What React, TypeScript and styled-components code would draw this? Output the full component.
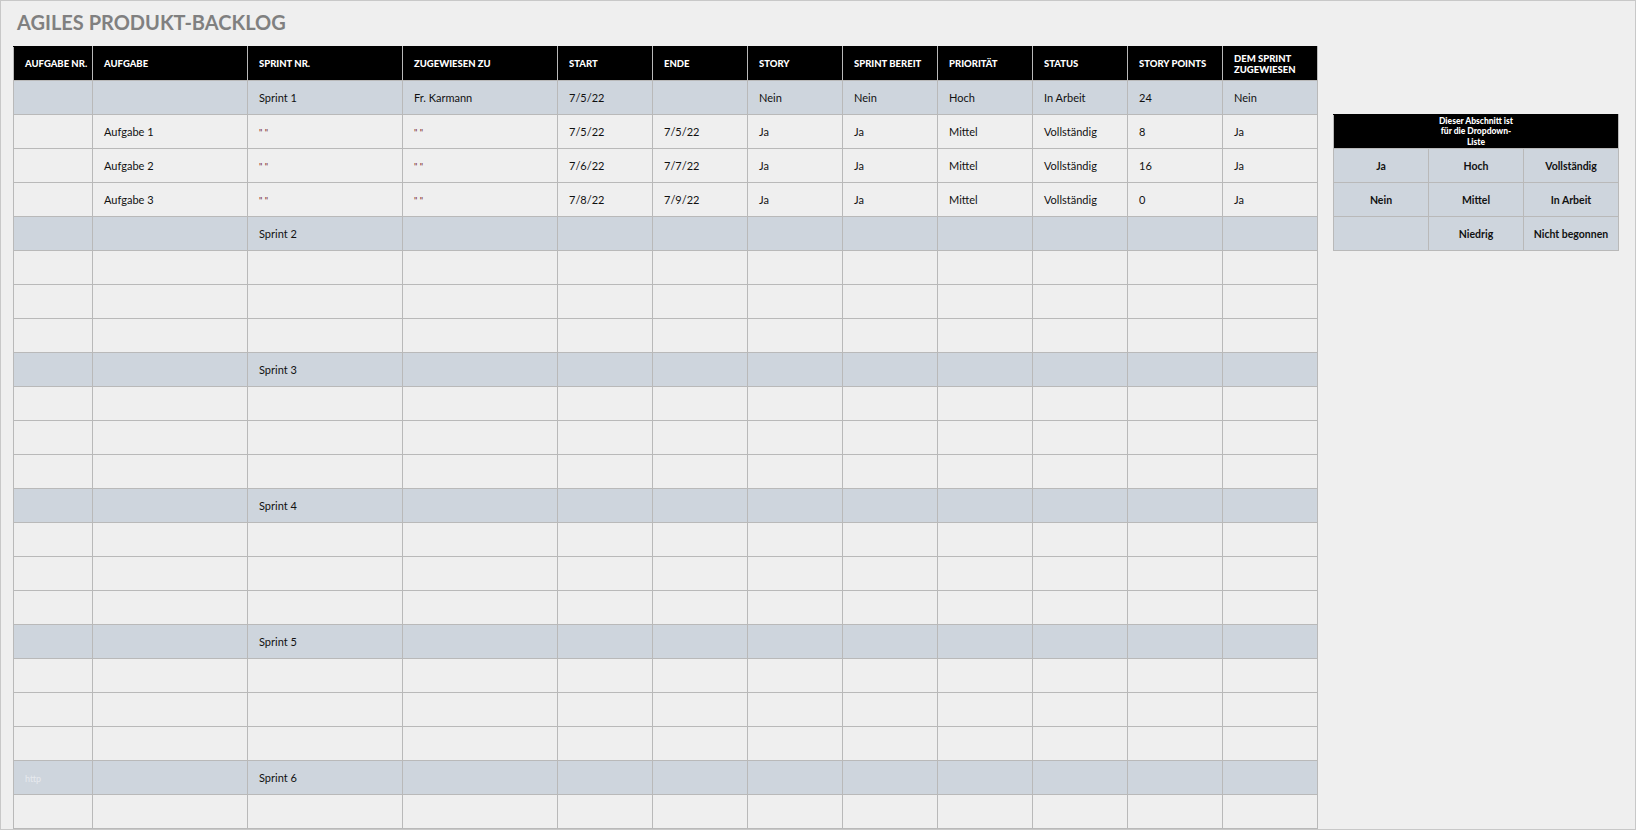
import React from "react";
import styled, { createGlobalStyle } from "styled-components";

const GlobalStyle = createGlobalStyle`
    html, body {
        margin: 0;
        padding: 0;
        background: #efefef;
    }
    * {
        box-sizing: border-box;
    }
`;

const Page = styled.div`
    width: 1636px;
    height: 830px;
    border: 1px solid #c8c8c8;
    background-color: #efefef;
    padding: 0 12px;
    overflow: hidden;
    font-family: "Lato", "Liberation Sans", sans-serif;
`;

const Title = styled.h1`
    margin: 0;
    padding-top: 8px;
    height: 45px;
    font-size: 20px;
    line-height: 26px;
    font-weight: 700;
    color: #808080;
    padding-left: 4px;
`;

const Content = styled.div`
    display: flex;
    align-items: flex-start;
    gap: 15px;
`;

const Table = styled.table`
    border-collapse: collapse;
    table-layout: fixed;
`;

const HeadCell = styled.th`
    background-color: #000;
    color: #fff;
    font-size: 9.5px;
    font-weight: 900;
    text-align: left;
    text-transform: uppercase;
    line-height: 11px;
    padding: 0 4px 0 11px;
    height: 34px;
    border: 1px solid #b9b9b9;
    border-top-color: #000;
`;

const Cell = styled.td<{ $sprint?: boolean }>`
    height: 34px;
    padding: 0 4px 0 11px;
    font-size: 11px;
    color: #111;
    white-space: nowrap;
    border: 1px solid #b9b9b9;
    background-color: ${props => (props.$sprint ? "#ced5dd" : "#efefef")};
`;

const Ditto = styled.span`
    color: #7a1c2c;
    font-size: 9px;
`;

const Faint = styled.span`
    color: #e6e9ee;
    font-size: 9px;
`;

const Side = styled.div`
    margin-top: 68px;
`;

const ListHead = styled.th`
    background-color: #000;
    color: #fff;
    font-size: 8.5px;
    font-weight: 900;
    line-height: 10.5px;
    text-align: center;
    height: 34px;
    padding: 0;
    border: 1px solid #b9b9b9;
    border-top-color: #000;
`;

const ListCell = styled.td`
    width: 95px;
    height: 34px;
    text-align: center;
    font-size: 10.5px;
    font-weight: 700;
    color: #111;
    background-color: #ced5dd;
    border: 1px solid #b9b9b9;
`;

const columns: { label: React.ReactNode; width: number }[] = [
    { label: "Aufgabe Nr.", width: 79 },
    { label: "Aufgabe", width: 155 },
    { label: "Sprint Nr.", width: 155 },
    { label: "Zugewiesen zu", width: 155 },
    { label: "Start", width: 95 },
    { label: "Ende", width: 95 },
    { label: "Story", width: 95 },
    { label: "Sprint bereit", width: 95 },
    { label: "Priorität", width: 95 },
    { label: "Status", width: 95 },
    { label: "Story Points", width: 95 },
    { label: <>Dem Sprint<br />zugewiesen</>, width: 95 },
];

type Row = { sprint?: boolean; cells: React.ReactNode[] };

const q = <Ditto>" "</Ditto>;

const filled: Row[] = [
    { sprint: true, cells: ["", "", "Sprint 1", "Fr. Karmann", "7/5/22", "", "Nein", "Nein", "Hoch", "In Arbeit", "24", "Nein"] },
    { cells: ["", "Aufgabe 1", q, q, "7/5/22", "7/5/22", "Ja", "Ja", "Mittel", "Vollständig", "8", "Ja"] },
    { cells: ["", "Aufgabe 2", q, q, "7/6/22", "7/7/22", "Ja", "Ja", "Mittel", "Vollständig", "16", "Ja"] },
    { cells: ["", "Aufgabe 3", q, q, "7/8/22", "7/9/22", "Ja", "Ja", "Mittel", "Vollständig", "0", "Ja"] },
];

const emptyCells = () => Array.from({ length: 12 }, () => "" as React.ReactNode);

const rows: Row[] = [...filled];
for (let s = 2; s <= 6; s++) {
    const cells = emptyCells();
    cells[2] = `Sprint ${s}`;
    if (s === 6) cells[0] = <Faint>http</Faint>;
    rows.push({ sprint: true, cells });
    const blanks = s === 6 ? 1 : 3;
    for (let i = 0; i < blanks; i++) rows.push({ cells: emptyCells() });
}

const dropdown = [
    ["Ja", "Hoch", "Vollständig"],
    ["Nein", "Mittel", "In Arbeit"],
    ["", "Niedrig", "Nicht begonnen"],
];

const BacklogTable = () => (
    <Table>
        <colgroup>
            {columns.map((c, i) => (
                <col key={i} style={{ width: c.width }} />
            ))}
        </colgroup>
        <thead>
            <tr>
                {columns.map((c, i) => (
                    <HeadCell key={i}>{c.label}</HeadCell>
                ))}
            </tr>
        </thead>
        <tbody>
            {rows.map((r, i) => (
                <tr key={i}>
                    {r.cells.map((c, j) => (
                        <Cell key={j} $sprint={r.sprint}>{c}</Cell>
                    ))}
                </tr>
            ))}
        </tbody>
    </Table>
);

const DropdownList = () => (
    <Side>
        <Table>
            <thead>
                <tr>
                    <ListHead colSpan={3}>
                        Dieser Abschnitt ist<br />für die Dropdown-<br />Liste
                    </ListHead>
                </tr>
            </thead>
            <tbody>
                {dropdown.map((r, i) => (
                    <tr key={i}>
                        {r.map((c, j) => (
                            <ListCell key={j}>{c}</ListCell>
                        ))}
                    </tr>
                ))}
            </tbody>
        </Table>
    </Side>
);

export default function App() {
    return (
        <Page>
            <GlobalStyle />
            <Title>AGILES PRODUKT-BACKLOG</Title>
            <Content>
                <BacklogTable />
                <DropdownList />
            </Content>
        </Page>
    );
}
